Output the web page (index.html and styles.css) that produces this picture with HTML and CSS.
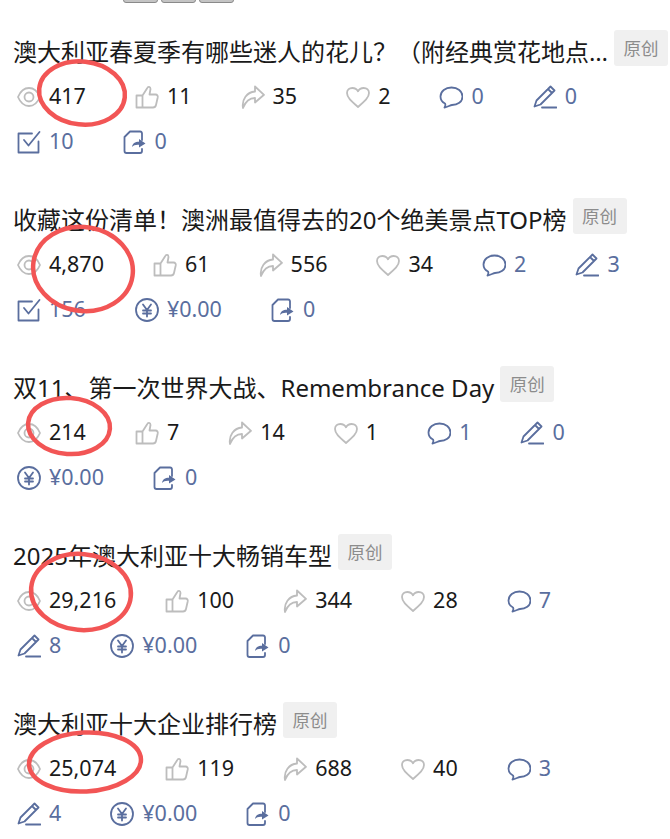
FILE: index.html
```html
<!DOCTYPE html>
<html lang="en">
<head>
  <meta charset="UTF-8">
  <meta name="viewport" content="width=device-width, initial-scale=1.0">
  <title>文章列表</title>
  <link rel="stylesheet" href="styles.css">
</head>
<body>
  <!-- icon sprite -->
  <svg class="sprite" aria-hidden="true">
    <symbol id="i-eye" viewBox="0 0 24 24"><path d="M1 12C6 0 18 0 23 12C18 24 6 24 1 12Z"/><circle cx="12" cy="12" r="4.5"/></symbol>
    <symbol id="i-thumb" viewBox="0 0 24 24"><path d="M7.500 10.500H1.500V22.500H7.500M7.500 10.500L12 3.500C13 1.200 15.500 1.500 15.500 4L14.500 9.500H20.500C22.500 9.500 23 11 22.700 12.500L21 20C20.600 21.700 19.500 22.500 18 22.500H7.500Z"/></symbol>
    <symbol id="i-share" viewBox="0 0 24 24"><path d="M14 1.500L23 9.800L14 17.500V13C8.500 13 4.500 16.500 2 23C.5 14.500 6 7 14 6.500Z"/></symbol>
    <symbol id="i-heart" viewBox="0 0 24 24"><path d="M12 22C5 16 1 12.500 1 8C1 4.800 3.500 3 6.300 3C8.800 3 11 4.300 12 6.300C13 4.300 15.200 3 17.700 3C20.500 3 23 4.800 23 8C23 12.500 19 16 12 22Z"/></symbol>
    <symbol id="i-comment" viewBox="0 0 24 24"><path d="M12.500 2.500C18.500 2.500 23.500 6 23.500 11.500C23.500 17 18.500 20 13 20C11.500 20 8.500 22 5.500 22.500C6.500 21 6.500 19.500 6 18.500C3 17 1.500 14.500 1.500 11.500C1.500 6 6.500 2.500 12.500 2.500Z"/></symbol>
    <symbol id="i-pen" viewBox="0 0 24 24"><path d="M1.500 21.500L3.500 15.500L17.500 1.500L21.500 5.500L7.500 19.500ZM15 4L19 8M9 22.500H23.500"/></symbol>
    <symbol id="i-check" viewBox="0 0 24 24"><path d="M21.500 11.500V22.500H1.500V3.500H15M7 10L11.500 15.500L22.500 2"/></symbol>
    <symbol id="i-forward" viewBox="0 0 24 24"><path d="M19 10V3.500C19 2.500 18.500 1.500 17 1.500H7L1.500 7V21C1.500 22 2.500 23 3.500 23H17C18.500 23 19 22 19 21V19"/><path class="solid" d="M9 17C9.500 13.500 12 11.800 16 11.800V9L22.500 13.500L16 17.500V14.800C13 14.500 10.500 15.200 9 17Z"/></symbol>
    <symbol id="i-yuan" viewBox="0 0 24 24"><circle cx="12" cy="12" r="11"/><path d="M8 6.500L12 12L16 6.500M12 12V18.500M8 12.500H16M8 15.500H16"/></symbol>
  </svg>

  <div class="top-bar">
    <span class="top-btn"></span>
    <span class="top-btn"></span>
    <span class="top-btn"></span>
  </div>

  <div class="article">
    <div class="title-row">
      <div class="title">澳大利亚春夏季有哪些迷人的花儿？（附经典赏花地点…</div>
      <span class="tag">原创</span>
    </div>
    <div class="stats">
      <div class="stat"><svg class="icon"><use href="#i-eye"/></svg><span>417</span></div>
      <div class="stat"><svg class="icon"><use href="#i-thumb"/></svg><span>11</span></div>
      <div class="stat"><svg class="icon"><use href="#i-share"/></svg><span>35</span></div>
      <div class="stat"><svg class="icon"><use href="#i-heart"/></svg><span>2</span></div>
      <div class="stat blue"><svg class="icon"><use href="#i-comment"/></svg><span>0</span></div>
      <div class="stat blue"><svg class="icon"><use href="#i-pen"/></svg><span>0</span></div>
      <div class="stat blue"><svg class="icon"><use href="#i-check"/></svg><span>10</span></div>
      <div class="stat blue"><svg class="icon"><use href="#i-forward"/></svg><span>0</span></div>
    </div>
  </div>

  <div class="article">
    <div class="title-row">
      <div class="title">收藏这份清单！澳洲最值得去的20个绝美景点TOP榜</div>
      <span class="tag">原创</span>
    </div>
    <div class="stats">
      <div class="stat"><svg class="icon"><use href="#i-eye"/></svg><span>4,870</span></div>
      <div class="stat"><svg class="icon"><use href="#i-thumb"/></svg><span>61</span></div>
      <div class="stat"><svg class="icon"><use href="#i-share"/></svg><span>556</span></div>
      <div class="stat"><svg class="icon"><use href="#i-heart"/></svg><span>34</span></div>
      <div class="stat blue"><svg class="icon"><use href="#i-comment"/></svg><span>2</span></div>
      <div class="stat blue"><svg class="icon"><use href="#i-pen"/></svg><span>3</span></div>
      <div class="stat blue"><svg class="icon"><use href="#i-check"/></svg><span>156</span></div>
      <div class="stat blue"><svg class="icon"><use href="#i-yuan"/></svg><span>¥0.00</span></div>
      <div class="stat blue"><svg class="icon"><use href="#i-forward"/></svg><span>0</span></div>
    </div>
  </div>

  <div class="article">
    <div class="title-row">
      <div class="title">双11、第一次世界大战、Remembrance Day</div>
      <span class="tag">原创</span>
    </div>
    <div class="stats">
      <div class="stat"><svg class="icon"><use href="#i-eye"/></svg><span>214</span></div>
      <div class="stat"><svg class="icon"><use href="#i-thumb"/></svg><span>7</span></div>
      <div class="stat"><svg class="icon"><use href="#i-share"/></svg><span>14</span></div>
      <div class="stat"><svg class="icon"><use href="#i-heart"/></svg><span>1</span></div>
      <div class="stat blue"><svg class="icon"><use href="#i-comment"/></svg><span>1</span></div>
      <div class="stat blue"><svg class="icon"><use href="#i-pen"/></svg><span>0</span></div>
      <div class="stat blue"><svg class="icon"><use href="#i-yuan"/></svg><span>¥0.00</span></div>
      <div class="stat blue"><svg class="icon"><use href="#i-forward"/></svg><span>0</span></div>
    </div>
  </div>

  <div class="article">
    <div class="title-row">
      <div class="title">2025年澳大利亚十大畅销车型</div>
      <span class="tag">原创</span>
    </div>
    <div class="stats">
      <div class="stat"><svg class="icon"><use href="#i-eye"/></svg><span>29,216</span></div>
      <div class="stat"><svg class="icon"><use href="#i-thumb"/></svg><span>100</span></div>
      <div class="stat"><svg class="icon"><use href="#i-share"/></svg><span>344</span></div>
      <div class="stat"><svg class="icon"><use href="#i-heart"/></svg><span>28</span></div>
      <div class="stat blue"><svg class="icon"><use href="#i-comment"/></svg><span>7</span></div>
      <div class="stat blue"><svg class="icon"><use href="#i-pen"/></svg><span>8</span></div>
      <div class="stat blue"><svg class="icon"><use href="#i-yuan"/></svg><span>¥0.00</span></div>
      <div class="stat blue"><svg class="icon"><use href="#i-forward"/></svg><span>0</span></div>
    </div>
  </div>

  <div class="article">
    <div class="title-row">
      <div class="title">澳大利亚十大企业排行榜</div>
      <span class="tag">原创</span>
    </div>
    <div class="stats">
      <div class="stat"><svg class="icon"><use href="#i-eye"/></svg><span>25,074</span></div>
      <div class="stat"><svg class="icon"><use href="#i-thumb"/></svg><span>119</span></div>
      <div class="stat"><svg class="icon"><use href="#i-share"/></svg><span>688</span></div>
      <div class="stat"><svg class="icon"><use href="#i-heart"/></svg><span>40</span></div>
      <div class="stat blue"><svg class="icon"><use href="#i-comment"/></svg><span>3</span></div>
      <div class="stat blue"><svg class="icon"><use href="#i-pen"/></svg><span>4</span></div>
      <div class="stat blue"><svg class="icon"><use href="#i-yuan"/></svg><span>¥0.00</span></div>
      <div class="stat blue"><svg class="icon"><use href="#i-forward"/></svg><span>0</span></div>
    </div>
  </div>

  <!-- red marks drawn over the view counts -->
  <svg class="marks" viewBox="0 0 670 839" aria-hidden="true">
    <ellipse cx="82" cy="93" rx="43" ry="31.500" transform="rotate(6 82 93)"/>
    <ellipse cx="83" cy="269" rx="50" ry="42" transform="rotate(8 83 269)"/>
    <ellipse cx="69" cy="426" rx="41" ry="28" transform="rotate(4 69 426)"/>
    <ellipse cx="81" cy="592" rx="50" ry="38" transform="rotate(5 81 592)"/>
    <ellipse cx="85" cy="762" rx="56" ry="29.500" transform="rotate(-3 85 762)"/>
  </svg>
</body>
</html>
```

FILE: styles.css
```css
body, html {
  margin: 0;
  padding: 0;
  width: 100%;
  height: 100%;
  overflow: hidden;
  background: #fff;
}

body {
  position: relative;
  font-family: "Noto Sans", "Noto Sans CJK SC", sans-serif;
}

.sprite {
  display: none;
}

.top-bar {
  display: flex;
  align-items: flex-end;
  gap: 3px;
  height: 3px;
  padding-left: 123px;
  margin-bottom: 27px;
  overflow: hidden;
}

.top-btn {
  flex: none;
  width: 33px;
  height: 12px;
  background: #c4c4c4;
  border: 1px solid #8a8a8a;
  border-radius: 3px;
}

.article {
  padding: 0 0 34px 13px;
}

.title-row {
  display: flex;
  align-items: flex-start;
  gap: 6px;
  height: 44px;
}

.title {
  font-size: 24px;
  line-height: 44px;
  color: #1a1a1a;
  white-space: nowrap;
}

.tag {
  flex: none;
  width: 54px;
  height: 36px;
  line-height: 36px;
  text-align: center;
  font-size: 17.500px;
  color: #8c8c8c;
  background: #f0f0f0;
  border-radius: 3px;
}

.stats {
  display: flex;
  flex-wrap: wrap;
  gap: 0 49px;
  padding: 0 30px 0 4px;
}

.stat {
  display: flex;
  align-items: center;
  gap: 8px;
  height: 45px;
  font-size: 21.500px;
  line-height: 43px;
  color: #1a1a1a;
}

.stat span {
  height: 45px;
}

.stat.blue {
  color: #5a6e9e;
}

.icon {
  flex: none;
  width: 24px;
  height: 24px;
  fill: none;
  stroke: #bdbdbd;
  stroke-width: 1.8;
  stroke-linejoin: round;
  stroke-linecap: round;
}

.blue .icon {
  stroke: #5a6e9e;
}

.solid {
  fill: #5a6e9e;
  stroke: none;
}

.marks {
  position: absolute;
  top: 0;
  left: 0;
  width: 670px;
  height: 839px;
  fill: none;
  stroke: #f25555;
  stroke-width: 4.500;
  pointer-events: none;
}
```
